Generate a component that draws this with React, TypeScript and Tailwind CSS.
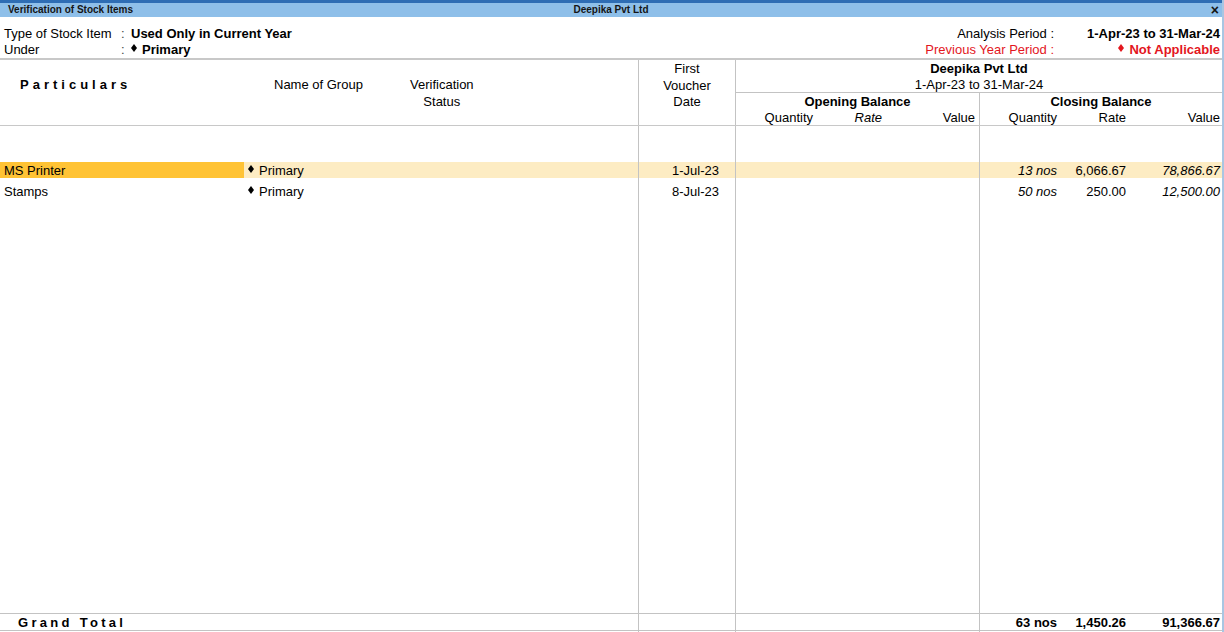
import React from "react";

const GRID =
  "grid grid-cols-[244px_156px_238px_97px_80px_75px_89px_81px_70px_92px]";
const LINE = "border-[#c3c3c3]";

function Diamond() {
  return (
    <svg
      width="6"
      height="8"
      viewBox="0 0 6 8"
      className="inline-block align-baseline mb-[2px] mr-[5px]"
    >
      <polygon points="3,0 6,4 3,8 0,4" fill="currentColor" />
    </svg>
  );
}

type Item = {
  name: string;
  group: string;
  date: string;
  qty: string;
  rate: string;
  value: string;
  selected?: boolean;
};

const items: Item[] = [
  {
    name: "MS Printer",
    group: "Primary",
    date: "1-Jul-23",
    qty: "13 nos",
    rate: "6,066.67",
    value: "78,866.67",
    selected: true,
  },
  {
    name: "Stamps",
    group: "Primary",
    date: "8-Jul-23",
    qty: "50 nos",
    rate: "250.00",
    value: "12,500.00",
  },
];

// empty grid row that only carries the column lines
function BlankRow({ className }: { className: string }) {
  return (
    <div className={`${GRID} ${className}`}>
      <div />
      <div />
      <div />
      <div className={`border-l ${LINE}`} />
      <div className={`border-l ${LINE}`} />
      <div />
      <div />
      <div className={`border-l ${LINE}`} />
      <div />
      <div />
    </div>
  );
}

function ItemRow({ item }: { item: Item }) {
  const band = item.selected ? "bg-[#fdecc3]" : "";
  const cell = `h-[16px] leading-[16px] pt-[1px] ${band}`;
  return (
    <div className={`${GRID} h-[21px]`}>
      <div>
        <div
          className={`h-[16px] leading-[16px] pt-[1px] pl-[4px] ${
            item.selected ? "bg-[#ffc335]" : ""
          }`}
        >
          {item.name}
        </div>
      </div>
      <div>
        <div className={`${cell} pl-[4px]`}>
          <Diamond />
          {item.group}
        </div>
      </div>
      <div>
        <div className={cell} />
      </div>
      <div className={`border-l ${LINE}`}>
        <div className={`${cell} text-right pr-[16px]`}>{item.date}</div>
      </div>
      <div className={`border-l ${LINE}`}>
        <div className={cell} />
      </div>
      <div>
        <div className={cell} />
      </div>
      <div>
        <div className={cell} />
      </div>
      <div className={`border-l ${LINE}`}>
        <div className={`${cell} text-right pr-[3px] italic`}>{item.qty}</div>
      </div>
      <div>
        <div className={`${cell} text-right pr-[4px]`}>{item.rate}</div>
      </div>
      <div>
        <div className={`${cell} text-right pr-[2px] italic`}>{item.value}</div>
      </div>
    </div>
  );
}

export default function App() {
  return (
    <div className="w-[1224px] h-[632px] overflow-hidden bg-white text-black text-[13px] font-['Liberation_Sans',Arial,sans-serif] flex flex-col border-r-2 border-[#a9c6e2]">
      {/* Title bar */}
      <div className="h-[17px] shrink-0 border-t-[3px] border-[#2e6db4] bg-[#8ebfe9] grid grid-cols-[1fr_auto_1fr] items-center text-[10px] font-bold leading-[14px] text-[#151515]">
        <div className="pl-[8px]">Verification of Stock Items</div>
        <div>Deepika Pvt Ltd</div>
        <div className="text-right pr-[3px] text-[14px] leading-[14px]">×</div>
      </div>

      {/* Report info */}
      <div className="h-[41px] shrink-0 pt-[9px] flex justify-between leading-[16px]">
        <div className="grid grid-cols-[117px_10px_auto] pl-[4px]">
          <div>Type of Stock Item</div>
          <div className="text-[#444]">:</div>
          <div className="font-bold">Used Only in Current Year</div>
          <div>Under</div>
          <div className="text-[#444]">:</div>
          <div className="font-bold">
            <Diamond />
            Primary
          </div>
        </div>
        <div className="grid grid-cols-[auto_168px]">
          <div className="text-right">Analysis Period :</div>
          <div className="text-right pr-[2px] font-bold">
            1-Apr-23 to 31-Mar-24
          </div>
          <div className="text-right text-[#e3161d]">
            Previous Year Period :
          </div>
          <div className="text-right pr-[2px] font-bold text-[#e3161d]">
            <Diamond />
            Not Applicable
          </div>
        </div>
      </div>

      {/* Column headers */}
      <div className="shrink-0 border-t-2 border-b border-[#c8c8c8] flex leading-[16px]">
        <div className="w-[638px] h-[65px] flex">
          <div className="w-[244px] pt-[17px] pl-[20px] font-bold tracking-[4px]">
            Particulars
          </div>
          <div className="w-[156px] pt-[17px] pl-[30px]">Name of Group</div>
          <div className="w-[238px] pt-[16px] pl-[10px]">
            <div className="inline-block text-center leading-[17px]">
              Verification
              <br />
              Status
            </div>
          </div>
        </div>
        <div
          className={`w-[97px] border-l ${LINE} text-center pt-[1px] leading-[16.5px]`}
        >
          First
          <br />
          Voucher
          <br />
          Date
        </div>
        <div className={`w-[487px] border-l ${LINE} flex flex-col`}>
          <div className={`h-[33px] border-b ${LINE} text-center pt-[1px]`}>
            <div className="font-bold">Deepika Pvt Ltd</div>
            <div>1-Apr-23 to 31-Mar-24</div>
          </div>
          <div className="flex h-[32px] pt-[1px]">
            <div className="w-[243px]">
              <div className="text-center font-bold">Opening Balance</div>
              <div className="grid grid-cols-[79px_75px_89px]">
                <div className="text-right pr-[2px]">Quantity</div>
                <div className="text-right pr-[8px] italic">Rate</div>
                <div className="text-right pr-[4px]">Value</div>
              </div>
            </div>
            <div className={`w-[243px] border-l ${LINE} -mt-[1px] pt-[1px]`}>
              <div className="text-center font-bold">Closing Balance</div>
              <div className="grid grid-cols-[80px_70px_92px]">
                <div className="text-right pr-[3px]">Quantity</div>
                <div className="text-right pr-[4px]">Rate</div>
                <div className="text-right pr-[2px]">Value</div>
              </div>
            </div>
          </div>
        </div>
      </div>

      {/* Body */}
      <BlankRow className="h-[36px] shrink-0" />
      {items.map((item) => (
        <ItemRow key={item.name} item={item} />
      ))}
      <BlankRow className="flex-1" />

      {/* Grand total */}
      <div
        className={`${GRID} h-[18px] shrink-0 border-y ${LINE} leading-[16px] font-bold`}
      >
        <div className="pl-[18px] pt-[1px] tracking-[3.3px]">Grand Total</div>
        <div />
        <div />
        <div className={`border-l ${LINE}`} />
        <div className={`border-l ${LINE}`} />
        <div />
        <div />
        <div className={`border-l ${LINE} text-right pr-[3px] pt-[1px]`}>
          63 nos
        </div>
        <div className="text-right pr-[4px] pt-[1px]">1,450.26</div>
        <div className="text-right pr-[2px] pt-[1px]">91,366.67</div>
      </div>
      <BlankRow className="h-[1px] shrink-0" />
    </div>
  );
}
